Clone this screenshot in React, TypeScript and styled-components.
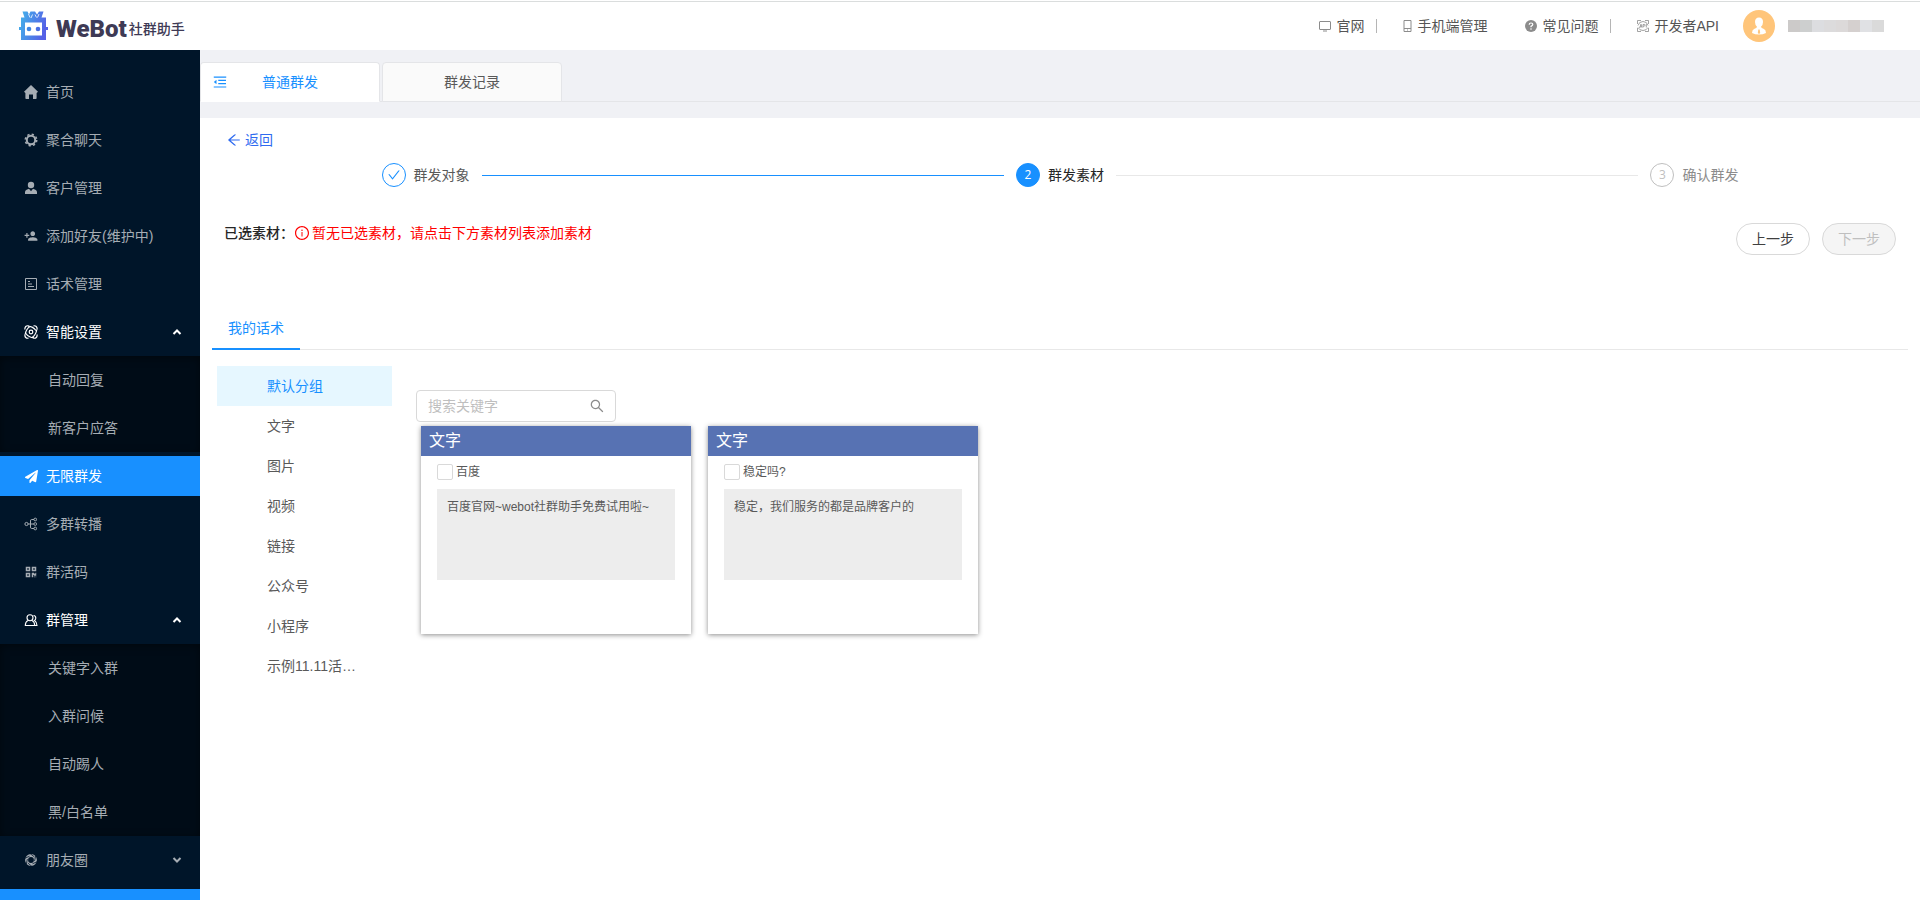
import React from "react";
import styled, { createGlobalStyle, css } from "styled-components";
import {
  AiOutlineArrowLeft,
  AiOutlineCheck,
  AiOutlineInfoCircle,
  AiOutlineMenuFold,
  AiOutlineSearch,
} from "react-icons/ai";
import { MdPersonAdd } from "react-icons/md";
import { FaPaperPlane, FaQrcode } from "react-icons/fa";

const GlobalStyle = createGlobalStyle`
  *, *::before, *::after { box-sizing: border-box; }
  body {
    margin: 0;
    background: #f0f1f5;
    color: #595959;
    font: 14px/20px "Liberation Sans", "Noto Sans CJK SC", sans-serif;
  }
  button, input { font: inherit; color: inherit; }
  button { padding: 0; border: 0; background: none; cursor: pointer; }
  a { color: inherit; text-decoration: none; }
  ul { list-style: none; margin: 0; padding: 0; }
  h1, h2, p { margin: 0; font: inherit; }
  svg { display: block; flex: none; }
`;

const Page = styled.div`
  display: flex;
  flex-direction: column;
  min-height: 100vh;
`;

/* ---------- header ---------- */

const Header = styled.header`
  display: flex;
  align-items: center;
  justify-content: space-between;
  height: 50px;
  padding: 2px 36px 0 18px;
  background: linear-gradient(#fff 1px, #dadddd 1px, #dadddd 2px, #fff 2px);
`;

const Brand = styled.a`
  display: flex;
  align-items: center;
  gap: 8px;
  color: #3e3a55;
`;

const BrandName = styled.span`
  display: flex;
  align-items: center;
  gap: 2px;
  padding-top: 5px;
  font-size: 14px;
  font-weight: 500;
  line-height: 28px;
`;

const BrandLatin = styled.strong`
  font-family: Roboto, sans-serif;
  font-size: 24px;
  font-weight: 900;
`;

const HeaderNav = styled.nav`
  display: flex;
  align-items: center;
`;

const HeaderLink = styled.a<{ $divided?: boolean }>`
  display: flex;
  align-items: center;
  gap: 5px;
  margin-left: ${(p) => (p.$divided ? 26 : 38)}px;
  color: #555;

  svg { color: #8c8c8c; }

  &:first-child { margin-left: 0; }
`;

const Divider = styled.span`
  width: 1px;
  height: 14px;
  margin-left: 12px;
  background: #b5b5b5;
`;

const Avatar = styled.span`
  display: grid;
  place-items: center;
  width: 32px;
  height: 32px;
  margin: 0 13px 0 24px;
  border-radius: 50%;
  background: #ffc57a;
  color: #fff;
`;

const MaskedName = styled.span`
  display: flex;
  height: 12px;
`;

const MaskBlock = styled.span<{ $tone: string }>`
  width: 12px;
  background: ${(p) => p.$tone};
`;

/* ---------- sidebar ---------- */

const Body = styled.div`
  display: flex;
  flex: 1;
`;

const Sidebar = styled.aside`
  display: flex;
  flex-direction: column;
  flex: none;
  width: 200px;
  padding-top: 18px;
  background: #001529;
`;

const SiderTrigger = styled.button`
  height: 11px;
  margin-top: auto;
  background: #1890ff;
`;

const itemStyle = css`
  display: flex;
  align-items: center;
  width: 100%;
  height: 40px;
  margin: 4px 0;
  color: #a6adb4;
`;

const MenuLink = styled.a<{ $active?: boolean; $open?: boolean }>`
  ${itemStyle}
  gap: 8px;
  padding: 0 18px 0 24px;
  ${(p) => p.$active && css`background: #1890ff; color: #fff;`}
  ${(p) => p.$open && css`color: #fff;`}
`;

const MenuIcon = styled.span`
  display: grid;
  place-items: center;
  width: 14px;
  height: 14px;
`;

const SubMenu = styled.ul`
  background: #000c17;
  box-shadow: inset 0 2px 8px rgba(0, 0, 0, 0.45);
`;

const SubLink = styled.a`
  ${itemStyle}
  padding-left: 48px;
`;

const MenuRow = styled.li`
  display: flow-root;
`;

const Grow = styled.span`
  flex: 1;
`;

/* ---------- page tabs ---------- */

const Main = styled.main`
  display: flex;
  flex-direction: column;
  flex: 1;
  min-width: 0;
`;

const PageTabs = styled.div`
  display: flex;
  gap: 2px;
  margin: 12px 0 16px;
  box-shadow: inset 0 -1px #e4e5e8;
`;

const PageTab = styled.button<{ $active?: boolean }>`
  display: grid;
  grid-template-columns: 27px 1fr 27px;
  align-items: center;
  width: 180px;
  height: 40px;
  border: 1px solid #e4e5e8;
  border-radius: 4px 4px 0 0;
  background: #fafafa;

  span { grid-column: 2; text-align: center; }

  ${(p) =>
    p.$active &&
    css`
      border-bottom-color: #fff;
      background: #fff;
      color: #1890ff;
    `}

  svg { justify-self: end; }
`;

/* ---------- content ---------- */

const Content = styled.div`
  flex: 1;
  padding: 12px;
  background: #fff;
`;

const BackButton = styled.button`
  display: flex;
  align-items: center;
  gap: 3px;
  margin-left: 14px;
  color: #2f6bf0;
`;

const Steps = styled.ol`
  display: flex;
  width: 80%;
  margin: 13px auto 36px;
  padding: 0;
  list-style: none;
`;

type StepState = "done" | "current" | "waiting";

const Step = styled.li<{ $state: StepState }>`
  display: flex;
  align-items: center;
  flex: 1;
  gap: 8px;
  height: 24px;
  color: ${(p) =>
    p.$state === "done" ? "#595959" : p.$state === "current" ? "#262626" : "#8c8c8c"};

  &:last-child { flex: none; }

  &:not(:last-child)::after {
    content: "";
    flex: 1;
    height: 1px;
    margin: 0 12px 0 4px;
    background: ${(p) => (p.$state === "done" ? "#1890ff" : "#e8e8e8")};
  }
`;

const StepMark = styled.span<{ $state: StepState }>`
  display: grid;
  place-items: center;
  width: 24px;
  height: 24px;
  border: 1px solid ${(p) => (p.$state === "waiting" ? "#bfbfbf" : "#1890ff")};
  border-radius: 50%;
  background: ${(p) => (p.$state === "current" ? "#1890ff" : "#fff")};
  color: ${(p) =>
    p.$state === "current" ? "#fff" : p.$state === "done" ? "#1890ff" : "#bfbfbf"};
  font-family: "Open Sans", sans-serif;
  font-size: 12px;
`;

const Selection = styled.section`
  display: flex;
  align-items: flex-start;
  justify-content: space-between;
  min-height: 80px;
  padding: 0 12px;
`;

const SelectionText = styled.p`
  display: flex;
  align-items: center;
  color: #262626;
  font-weight: 500;
`;

const Warning = styled.span`
  display: flex;
  align-items: center;
  gap: 2px;
  color: #f00;
  font-weight: 400;
`;

const Actions = styled.div`
  display: flex;
  gap: 12px;
`;

const RoundButton = styled.button`
  width: 74px;
  height: 32px;
  border: 1px solid #d9d9d9;
  border-radius: 16px;
  background: #fff;
  color: #404040;

  &:disabled {
    background: #f5f5f5;
    color: #bfbfbf;
    cursor: not-allowed;
  }
`;

const MaterialTabs = styled.div`
  display: flex;
  margin-bottom: 16px;
  box-shadow: inset 0 -1px #e8e8e8;
`;

const MaterialTab = styled.button`
  padding: 15px 16px 10px;
  border-bottom: 2px solid #1890ff;
  color: #1890ff;
`;

const Library = styled.div`
  display: flex;
  gap: 24px;
  padding-left: 5px;
`;

const GroupList = styled.ul`
  flex: none;
  width: 175px;
`;

const GroupButton = styled.button<{ $active?: boolean }>`
  width: 100%;
  height: 40px;
  padding-left: 50px;
  text-align: left;
  ${(p) => p.$active && css`background: #e6f7ff; color: #1890ff;`}
`;

const Materials = styled.section`
  flex: 1;
  padding-top: 24px;
`;

const SearchBox = styled.label`
  display: flex;
  align-items: center;
  width: 200px;
  height: 32px;
  padding: 0 10px 0 11px;
  border: 1px solid #d9d9d9;
  border-radius: 4px;
  background: #fff;
  color: #8c8c8c;
`;

const SearchInput = styled.input`
  flex: 1;
  min-width: 0;
  padding: 0;
  border: 0;
  outline: 0;
  background: none;

  &::placeholder { color: #bfbfbf; opacity: 1; }
`;

const Cards = styled.div`
  display: flex;
  flex-wrap: wrap;
  gap: 17px;
  padding: 4px 5px;
`;

const Card = styled.article`
  width: 270px;
  height: 208px;
  background: #fff;
  box-shadow: 0 1px 5px rgba(0, 0, 0, 0.45);
`;

const CardTitle = styled.h2`
  height: 30px;
  padding-left: 8px;
  background: #5772b3;
  color: #fff;
  font-size: 16px;
  line-height: 30px;
`;

const CardPick = styled.label`
  display: flex;
  align-items: center;
  gap: 3px;
  height: 16px;
  margin: 8px 16px 9px;
  font-size: 12px;
`;

const Tick = styled.input`
  appearance: none;
  width: 16px;
  height: 16px;
  margin: 0;
  border: 1px solid #d9d9d9;
  border-radius: 2px;
  background: #fff;

  &:checked { background: #1890ff; }
`;

const CardText = styled.p`
  height: 91px;
  margin: 0 16px;
  padding: 8px 10px;
  background: #ededed;
  font-size: 12px;
`;

/* ---------- drawings ---------- */

const Line: React.FC<{ children: React.ReactNode; size?: number; width?: number }> = ({
  children,
  size = 14,
  width = 1,
}) => (
  <svg
    width={size}
    height={size}
    viewBox="0 0 14 14"
    fill="none"
    stroke="currentColor"
    strokeWidth={width}
    aria-hidden="true"
  >
    {children}
  </svg>
);

const Solid: React.FC<{ children: React.ReactNode; size?: number }> = ({ children, size = 14 }) => (
  <svg width={size} height={size} viewBox="0 0 14 14" fill="currentColor" aria-hidden="true">
    {children}
  </svg>
);

const LogoMark = () => (
  <svg width="30" height="30" viewBox="0 0 30 30" aria-hidden="true">
    <defs>
      <linearGradient id="logo" x1="0" y1="0" x2="1" y2="0.3">
        <stop offset="0" stopColor="#41b6ea" />
        <stop offset="1" stopColor="#5560e6" />
      </linearGradient>
    </defs>
    <path
      fill="url(#logo)"
      fillRule="evenodd"
      d="M4.500.5h5l1.500 3L12.500.5h4.500l2 3L21 .5h4.500L23.500 6.500H28V16h2v3h-2v10H3V19H1v-3h2V6.500h3.500zM7 11.500v13h17v-13z"
    />
    <path d="M10.500 3l1.500 3.500M14.500 3.500 13 7M17 3.500l1.500 3M21 3l-1.500 3.500" stroke="#fff" strokeWidth="0.800" />
    <circle cx="11" cy="18" r="2.300" fill="#3f86e4" />
    <circle cx="20" cy="18" r="2.300" fill="#4a6fe4" />
  </svg>
);

const HomeIcon = () => (
  <Solid>
    <path d="M7 0 14 6.800 12.600 8v5.200q0 .8-.8.8H9V9.500H5V14H2.200q-.8 0-.8-.8V8L0 6.800z" />
  </Solid>
);

const GearIcon = () => (
  <Line>
    <circle cx="7" cy="7" r="4.200" strokeWidth="2" />
    <circle cx="7" cy="7" r="5.700" strokeWidth="1.600" strokeDasharray="2.240 2.240" />
  </Line>
);

const CustomerIcon = () => (
  <Solid>
    <circle cx="7" cy="4" r="3.200" />
    <path d="M1 13v-2q0-1.500 1.600-2.200L5 7.800l2 2.400 2-2.400 2.400 1Q13 9.500 13 11v2z" />
  </Solid>
);

const ScriptIcon = () => (
  <Line>
    <path d="M1.500 1.500h11v11h-11zM4 4.500h2M4 7h4M4 9.500h6" />
  </Line>
);

const SmartIcon = () => (
  <Line width={1.2}>
    <path d="M4.500.8Q.8.300.8 4.500M9.500.8q3.700-.5 3.700 3.700M4.500 13.200Q.8 13.700.8 9.500M9.500 13.200q3.700.5 3.700-3.700" />
    <path d="M4 1.200Q9 1.500 12 5.500M12.800 4.500Q12 10 8 12.500M10 12.800Q4.500 12.500 2 8.500M1.200 9.500Q2 4 6 1.500" />
    <circle cx="7" cy="7" r="1.800" />
  </Line>
);

const RelayIcon = () => (
  <Line>
    <circle cx="2.500" cy="7" r="1.600" />
    <path d="M4 7h2M10 2.500H7.500Q6.500 2.500 6.500 4v6q0 1.500 1 1.500H10M6.500 7H10" />
    <rect x="10" y="1.200" width="2.500" height="2.600" rx="1" />
    <rect x="10" y="5.700" width="2.500" height="2.600" rx="1" />
    <rect x="10" y="10.200" width="2.500" height="2.600" rx="1" />
  </Line>
);

const GroupIcon = () => (
  <Line width={1.1}>
    <circle cx="6" cy="4.800" r="3" />
    <path d="M3.800 7.500Q1.300 9 1.300 12.500h9.400Q10.700 9 8.200 7.500" />
    <path d="M9.500 2.500q2.300.3 2.300 2.500 0 1.700-1.300 2.500 2.300 1.500 2.500 5h-2" />
  </Line>
);

const ApertureIcon = () => (
  <Line>
    <circle cx="7" cy="7" r="4.400" strokeWidth="3" />
    <path
      stroke="#001529"
      strokeWidth="0.800"
      d="M6 .5 10.500 4M11.800 2.500 10.500 8M13.500 8.500 8.500 10.800M8 13.500 3.800 10M2.200 11.500 3.400 6M.5 5.500 5.500 3.200"
    />
  </Line>
);

const Caret: React.FC<{ open?: boolean }> = ({ open }) => (
  <svg width="10" height="8" viewBox="0 0 10 8" fill="none" stroke="currentColor" strokeWidth="2" aria-hidden="true">
    <path d={open ? "M1.500 6 5 2.500l3.500 3.500" : "M1.500 2 5 5.500l3.500-3.500"} />
  </svg>
);

const MonitorIcon = () => (
  <svg width="12" height="12" viewBox="0 0 12 12" fill="none" stroke="currentColor" aria-hidden="true">
    <rect x=".5" y="1.500" width="11" height="8" rx=".5" />
    <path d="M4 11h4" />
  </svg>
);

const PhoneIcon = () => (
  <svg width="9" height="12" viewBox="0 0 9 12" fill="none" stroke="currentColor" aria-hidden="true">
    <path d="M1 .5h7v11H1zM1 8.500h7M4 10h1" />
  </svg>
);

const HelpIcon = () => (
  <svg width="12" height="12" viewBox="0 0 12 12" aria-hidden="true">
    <circle cx="6" cy="6" r="6" fill="currentColor" />
    <path d="M4.200 4.800Q4.200 3 6 3t1.800 1.600Q7.800 5.600 6 6.400V7.200" fill="none" stroke="#fff" strokeWidth="1.200" />
    <circle cx="6" cy="9" r=".8" fill="#fff" />
  </svg>
);

const ApiIcon = () => (
  <svg width="12" height="12" viewBox="0 0 12 12" fill="none" stroke="currentColor" strokeWidth="0.800" aria-hidden="true">
    <path d="M.5 4V.5H4M8 .5h3.500V4M11.500 8v3.500H8M4 11.500H.5V8" />
    <path d="M1 5.500Q2 1.500 6 1.500t5 4M11 7.500Q9.500 10.500 6 10.500T1 7.500" />
    <path d="M2.500 8 4 4.200 5 7.500M3 6.800h1.800M6 7.500v-3q2-.6 2 .7T6 6.200M9.300 4v3.500" />
  </svg>
);

const PersonIcon = () => (
  <svg width="16" height="18" viewBox="0 0 16 18" fill="currentColor" aria-hidden="true">
    <path d="M8 .5Q12 .5 12 5q0 3-2 4.800.2 1.400 2.500 2Q15 12.700 15 16q-3 1.500-7 1.500T1 16q0-3.300 2.500-4.200 2.300-.6 2.500-2Q4 8 4 5 4 .5 8 .5z" />
    <path d="M7.300 12.500h1.400l.5 3.500L8 17l-1.200-1z" fill="#ffc57a" />
  </svg>
);

/* ---------- data ---------- */

interface MenuEntry {
  label: string;
  icon: React.ReactNode;
  active?: boolean;
  expandable?: boolean;
  children?: string[];
}

const menu: MenuEntry[] = [
  { label: "首页", icon: <HomeIcon /> },
  { label: "聚合聊天", icon: <GearIcon /> },
  { label: "客户管理", icon: <CustomerIcon /> },
  { label: "添加好友(维护中)", icon: <MdPersonAdd size={14} /> },
  { label: "话术管理", icon: <ScriptIcon /> },
  { label: "智能设置", icon: <SmartIcon />, expandable: true, children: ["自动回复", "新客户应答"] },
  { label: "无限群发", icon: <FaPaperPlane size={13} />, active: true },
  { label: "多群转播", icon: <RelayIcon /> },
  { label: "群活码", icon: <FaQrcode size={12} /> },
  {
    label: "群管理",
    icon: <GroupIcon />,
    expandable: true,
    children: ["关键字入群", "入群问候", "自动踢人", "黑/白名单"],
  },
  { label: "朋友圈", icon: <ApertureIcon />, expandable: true },
];

const groups = ["默认分组", "文字", "图片", "视频", "链接", "公众号", "小程序", "示例11.11活…"];

const materials = [
  { type: "文字", name: "百度", text: "百度官网~webot社群助手免费试用啦~" },
  { type: "文字", name: "稳定吗?", text: "稳定，我们服务的都是品牌客户的" },
];

const maskTones = ["#cccac9", "#cdcfcf", "#dcdde0", "#dcdbdc", "#dcd9d9", "#d5d0cf", "#e0e1e4", "#dadada"];

/* ---------- page ---------- */

export default function App() {
  return (
    <Page>
      <GlobalStyle />
      <Header>
        <Brand href="#">
          <LogoMark />
          <BrandName>
            <BrandLatin>WeBot</BrandLatin>
            社群助手
          </BrandName>
        </Brand>
        <HeaderNav>
          <HeaderLink href="#">
            <MonitorIcon />
            官网
          </HeaderLink>
          <Divider />
          <HeaderLink href="#" $divided>
            <PhoneIcon />
            手机端管理
          </HeaderLink>
          <HeaderLink href="#">
            <HelpIcon />
            常见问题
          </HeaderLink>
          <Divider />
          <HeaderLink href="#" $divided>
            <ApiIcon />
            开发者API
          </HeaderLink>
          <Avatar>
            <PersonIcon />
          </Avatar>
          <MaskedName>
            {maskTones.map((tone) => (
              <MaskBlock key={tone} $tone={tone} />
            ))}
          </MaskedName>
        </HeaderNav>
      </Header>

      <Body>
        <Sidebar>
          <nav>
            <ul>
              {menu.map((entry) => (
                <MenuRow key={entry.label}>
                  <MenuLink href="#" $active={entry.active} $open={!!entry.children}>
                    <MenuIcon>{entry.icon}</MenuIcon>
                    {entry.label}
                    {entry.expandable && (
                      <>
                        <Grow />
                        <Caret open={!!entry.children} />
                      </>
                    )}
                  </MenuLink>
                  {entry.children && (
                    <SubMenu>
                      {entry.children.map((child) => (
                        <MenuRow key={child}>
                          <SubLink href="#">{child}</SubLink>
                        </MenuRow>
                      ))}
                    </SubMenu>
                  )}
                </MenuRow>
              ))}
            </ul>
          </nav>
          <SiderTrigger aria-label="收起菜单" />
        </Sidebar>

        <Main>
          <PageTabs>
            <PageTab $active>
              <AiOutlineMenuFold size={16} />
              <span>普通群发</span>
            </PageTab>
            <PageTab>
              <span>群发记录</span>
            </PageTab>
          </PageTabs>

          <Content>
            <BackButton>
              <AiOutlineArrowLeft size={16} />
              返回
            </BackButton>

            <Steps>
              <Step $state="done">
                <StepMark $state="done">
                  <AiOutlineCheck size={14} />
                </StepMark>
                群发对象
              </Step>
              <Step $state="current">
                <StepMark $state="current">2</StepMark>
                群发素材
              </Step>
              <Step $state="waiting">
                <StepMark $state="waiting">3</StepMark>
                确认群发
              </Step>
            </Steps>

            <Selection>
              <SelectionText>
                已选素材：
                <Warning>
                  <AiOutlineInfoCircle size={16} />
                  暂无已选素材，请点击下方素材列表添加素材
                </Warning>
              </SelectionText>
              <Actions>
                <RoundButton>上一步</RoundButton>
                <RoundButton disabled>下一步</RoundButton>
              </Actions>
            </Selection>

            <MaterialTabs>
              <MaterialTab>我的话术</MaterialTab>
            </MaterialTabs>

            <Library>
              <GroupList>
                {groups.map((group, index) => (
                  <li key={group}>
                    <GroupButton $active={index === 0}>{group}</GroupButton>
                  </li>
                ))}
              </GroupList>
              <Materials>
                <SearchBox>
                  <SearchInput type="text" placeholder="搜索关键字" aria-label="搜索关键字" />
                  <AiOutlineSearch size={16} />
                </SearchBox>
                <Cards>
                  {materials.map((item) => (
                    <Card key={item.name}>
                      <CardTitle>{item.type}</CardTitle>
                      <CardPick>
                        <Tick type="checkbox" />
                        {item.name}
                      </CardPick>
                      <CardText>{item.text}</CardText>
                    </Card>
                  ))}
                </Cards>
              </Materials>
            </Library>
          </Content>
        </Main>
      </Body>
    </Page>
  );
}
